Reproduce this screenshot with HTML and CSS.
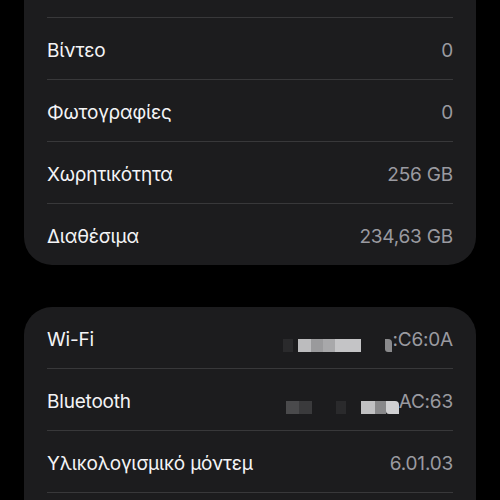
FILE: index.html
```html
<!DOCTYPE html>
<html lang="el">
<head>
    <meta charset="UTF-8">
    <title>Πληροφορίες</title>
    <link rel="stylesheet" href="styles.css">
</head>
<body>

<div class="page">
    <ul class="group group-top">
        <li class="row"></li>
        <li class="row"><span class="label">Βίντεο</span><span class="value">0</span></li>
        <li class="row"><span class="label">Φωτογραφίες</span><span class="value">0</span></li>
        <li class="row"><span class="label">Χωρητικότητα</span><span class="value">256 GB</span></li>
        <li class="row"><span class="label">Διαθέσιμα</span><span class="value">234,63 GB</span></li>
    </ul>

    <ul class="group">
        <li class="row">
            <span class="label">Wi-Fi</span>
            <span class="value">
                <span class="mask">
                    <i class="px w10 c2a"></i>
                    <i class="px w13 cbc gap5"></i>
                    <i class="px w12 c9a"></i>
                    <i class="px w12 ca8"></i>
                    <i class="px w26 cc4"></i>
                    <i class="px w7 c8a gap24 cut"></i>
                </span>
                <span>:C6:0A</span>
            </span>
        </li>
        <li class="row">
            <span class="label">Bluetooth</span>
            <span class="value">
                <span class="mask">
                    <i class="px w13 c4a"></i>
                    <i class="px w13 c3a"></i>
                    <i class="px w10 c2a gap24"></i>
                    <i class="px w14 cc0 gap15"></i>
                    <i class="px w11 c88"></i>
                    <i class="px w13 cd0 cut"></i>
                </span>
                <span>AC:63</span>
            </span>
        </li>
        <li class="row"><span class="label">Υλικολογισμικό μόντεμ</span><span class="value">6.01.03</span></li>
        <li class="row"></li>
    </ul>
</div>

</body>
</html>
```

FILE: styles.css
```css
* {
    box-sizing: border-box;
}

html, body {
    margin: 0;
    padding: 0;
    background: #000;
    height: 100%;
    overflow: hidden;
}

body {
    font-family: Inter, "Noto Sans", "DejaVu Sans", sans-serif;
    -webkit-font-smoothing: antialiased;
}

ul, li {
    margin: 0;
    padding: 0;
    list-style: none;
}

.page {
    padding: 0 24px;
    display: flex;
    flex-direction: column;
    gap: 42px;
}

.group {
    background: #1c1c1e;
    border-radius: 28px;
}

.group-top {
    margin-top: -44px;
}

.row {
    height: 61px;
    margin: 0 23px;
    padding-top: 3px;
    display: flex;
    align-items: center;
    justify-content: space-between;
}

.row + .row {
    height: 62px;
    border-top: 1px solid #38383a;
}

.label {
    font-size: 19px;
    color: #f4f4f6;
    letter-spacing: -0.2px;
}

.value {
    font-size: 19px;
    color: #9a9aa0;
    letter-spacing: -0.2px;
    display: flex;
    align-items: center;
}

/* pixelated redaction */
.mask {
    display: flex;
    height: 13px;
    margin-top: 12px;
}

.px {
    display: block;
    height: 13px;
}

.cut {
    border-radius: 0 4px 0 3px;
}

.gap5 { margin-left: 5px; }
.gap15 { margin-left: 15px; }
.gap24 { margin-left: 24px; }

.w7 { width: 7px; }
.w10 { width: 10px; }
.w11 { width: 11px; }
.w12 { width: 12px; }
.w13 { width: 13px; }
.w14 { width: 14px; }
.w26 { width: 26px; }

.c2a { background: #2a2a2c; }
.c3a { background: #3a3a3c; }
.c4a { background: #4a4a4c; }
.c88 { background: #88888a; }
.c8a { background: #8a8a8c; }
.c9a { background: #9a9a9c; }
.ca8 { background: #a8a8aa; }
.cbc { background: #bcbcbe; }
.cc0 { background: #c0c0c2; }
.cc4 { background: #c4c4c6; }
.cd0 { background: #d0d0d2; }
```
